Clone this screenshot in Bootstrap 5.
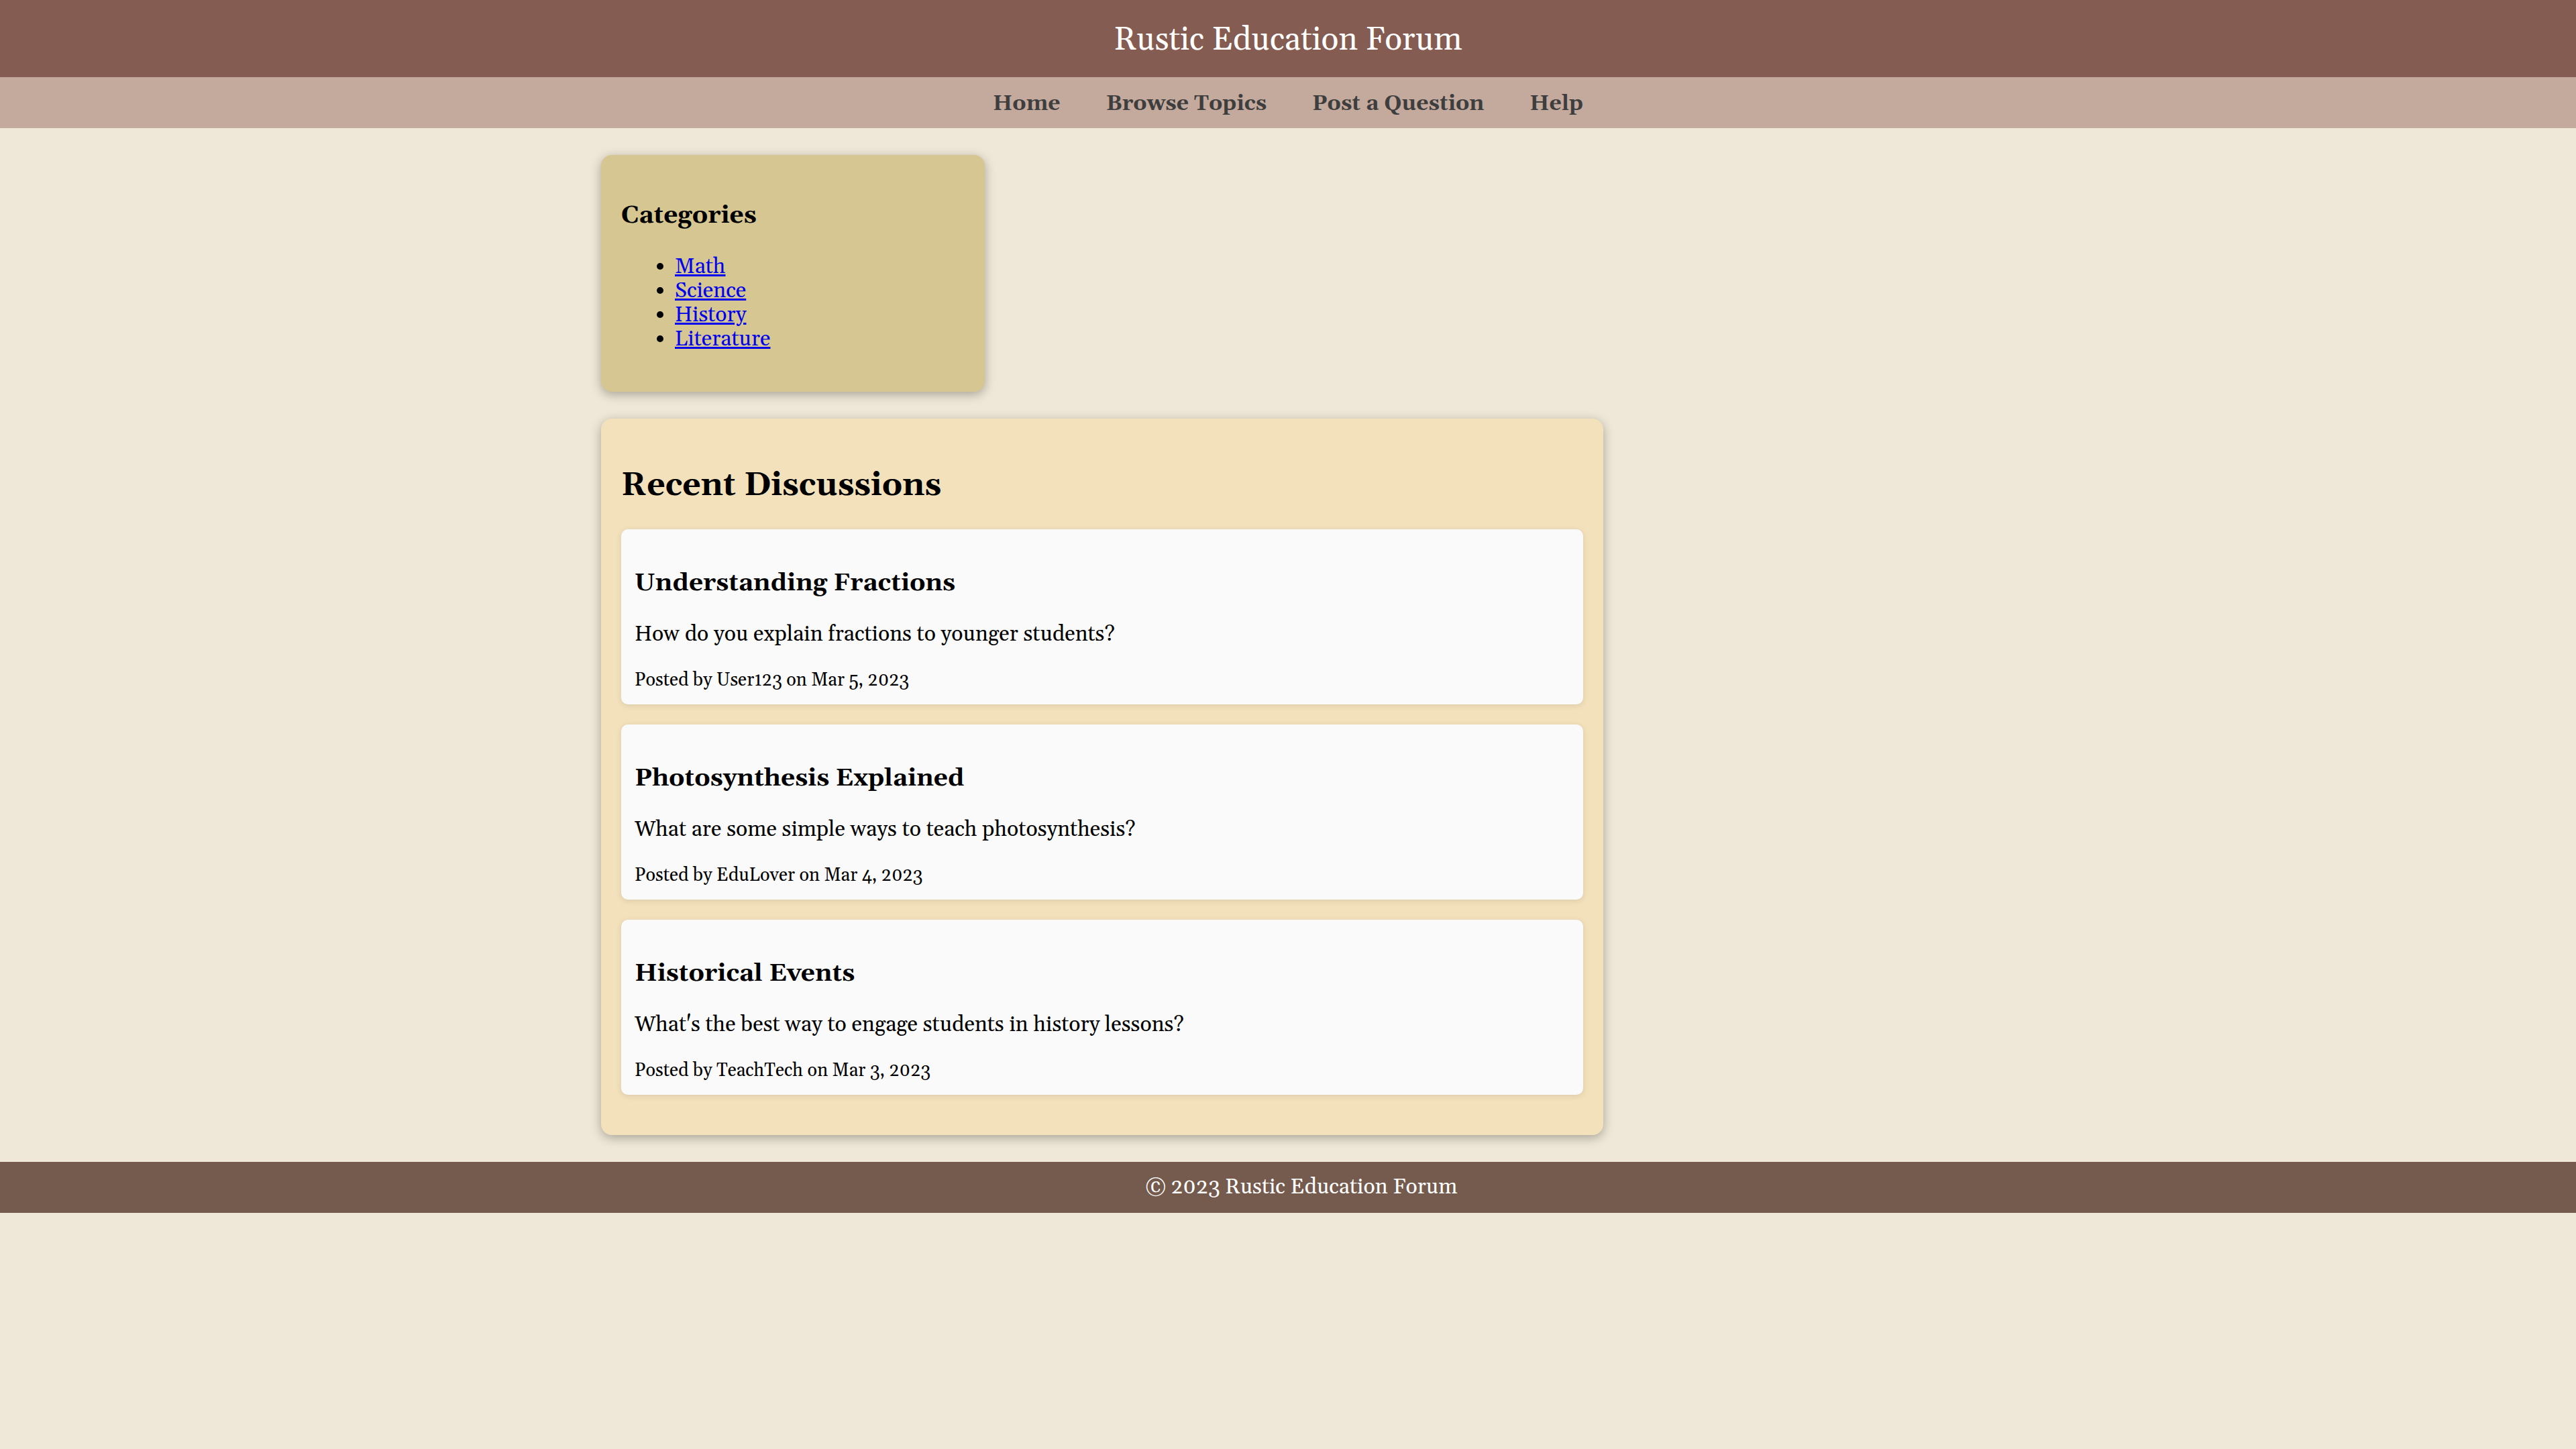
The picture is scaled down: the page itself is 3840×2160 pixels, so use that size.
<!DOCTYPE html>
<html lang="en">
<head>
<meta charset="utf-8">
<meta name="viewport" content="width=device-width, initial-scale=1">
<title>Rustic Education Forum</title>
<link href="https://cdn.jsdelivr.net/npm/bootstrap@5.3.0/dist/css/bootstrap.min.css" rel="stylesheet">
<style>
  body {
    background: #efe8d8;
    color: #000;
    font-family: Georgia, Gelasio, "Liberation Serif", serif;
    font-size: 32px;
    line-height: 36px;
  }
  .site-header { background: #855c51; color: #fff; padding: 32px 30px 28px; }
  .site-header h1 { font-size: 48px; line-height: 55px; font-weight: 400; }
  .site-nav { background: #c4a99d; padding: 22px 20px 18px; column-gap: 68px; }
  .site-nav a { color: #3e3e3e; }
  .page-wrap { max-width: 2048px; padding: 40px 0; row-gap: 40px; }
  .panel { padding: 30px; border-radius: 16px; box-shadow: 0 4px 16px rgba(0, 0, 0, .3); }
  .side-panel { background: #d5c692; width: 572px; max-width: 100%; }
  .side-panel ul { margin: 0 0 30px; padding-left: 80px; }
  .side-panel a { color: #00e; }
  .main-panel { background: #f3e1bc; width: 1494px; max-width: 100%; }
  h2 { font-size: 48px; line-height: 55px; margin: 42px 0 38px; font-weight: 700; }
  h3 { font-size: 37px; line-height: 43px; margin: 39px 0 37px; font-weight: 700; }
  .topic { background: #fafafa; padding: 20px 20px 18px; margin-bottom: 30px; border-radius: 10px; box-shadow: 0 2px 10px rgba(0, 0, 0, .1); }
  .topic p { margin-bottom: 32px; }
  .topic small { font-size: 27px; line-height: 36px; }
  .site-footer { background: #755b4d; color: #fff; padding: 20px 20px 20px 60px; }
</style>
<script src="https://cdn.jsdelivr.net/npm/bootstrap@5.3.0/dist/js/bootstrap.bundle.min.js" defer></script>
</head>
<body>
<header class="site-header text-center"><h1 class="m-0">Rustic Education Forum</h1></header>
<nav class="site-nav d-flex flex-wrap justify-content-center" aria-label="Main">
  <a class="fw-bold text-decoration-none" href="#">Home</a>
  <a class="fw-bold text-decoration-none" href="#">Browse Topics</a>
  <a class="fw-bold text-decoration-none" href="#">Post a Question</a>
  <a class="fw-bold text-decoration-none" href="#">Help</a>
</nav>
<div class="page-wrap mx-auto d-flex flex-column align-items-start">
  <aside class="panel side-panel">
    <h3>Categories</h3>
    <ul>
      <li><a href="#">Math</a></li>
      <li><a href="#">Science</a></li>
      <li><a href="#">History</a></li>
      <li><a href="#">Literature</a></li>
    </ul>
  </aside>
  <main class="panel main-panel">
    <h2>Recent Discussions</h2>
    <article class="topic d-flex flex-column">
      <h3>Understanding Fractions</h3>
      <p>How do you explain fractions to younger students?</p>
      <small>Posted by User123 on Mar 5, 2023</small>
    </article>
    <article class="topic d-flex flex-column">
      <h3>Photosynthesis Explained</h3>
      <p>What are some simple ways to teach photosynthesis?</p>
      <small>Posted by EduLover on Mar 4, 2023</small>
    </article>
    <article class="topic d-flex flex-column">
      <h3>Historical Events</h3>
      <p>What's the best way to engage students in history lessons?</p>
      <small>Posted by TeachTech on Mar 3, 2023</small>
    </article>
  </main>
</div>
<footer class="site-footer text-center">© 2023 Rustic Education Forum</footer>
</body>
</html>
